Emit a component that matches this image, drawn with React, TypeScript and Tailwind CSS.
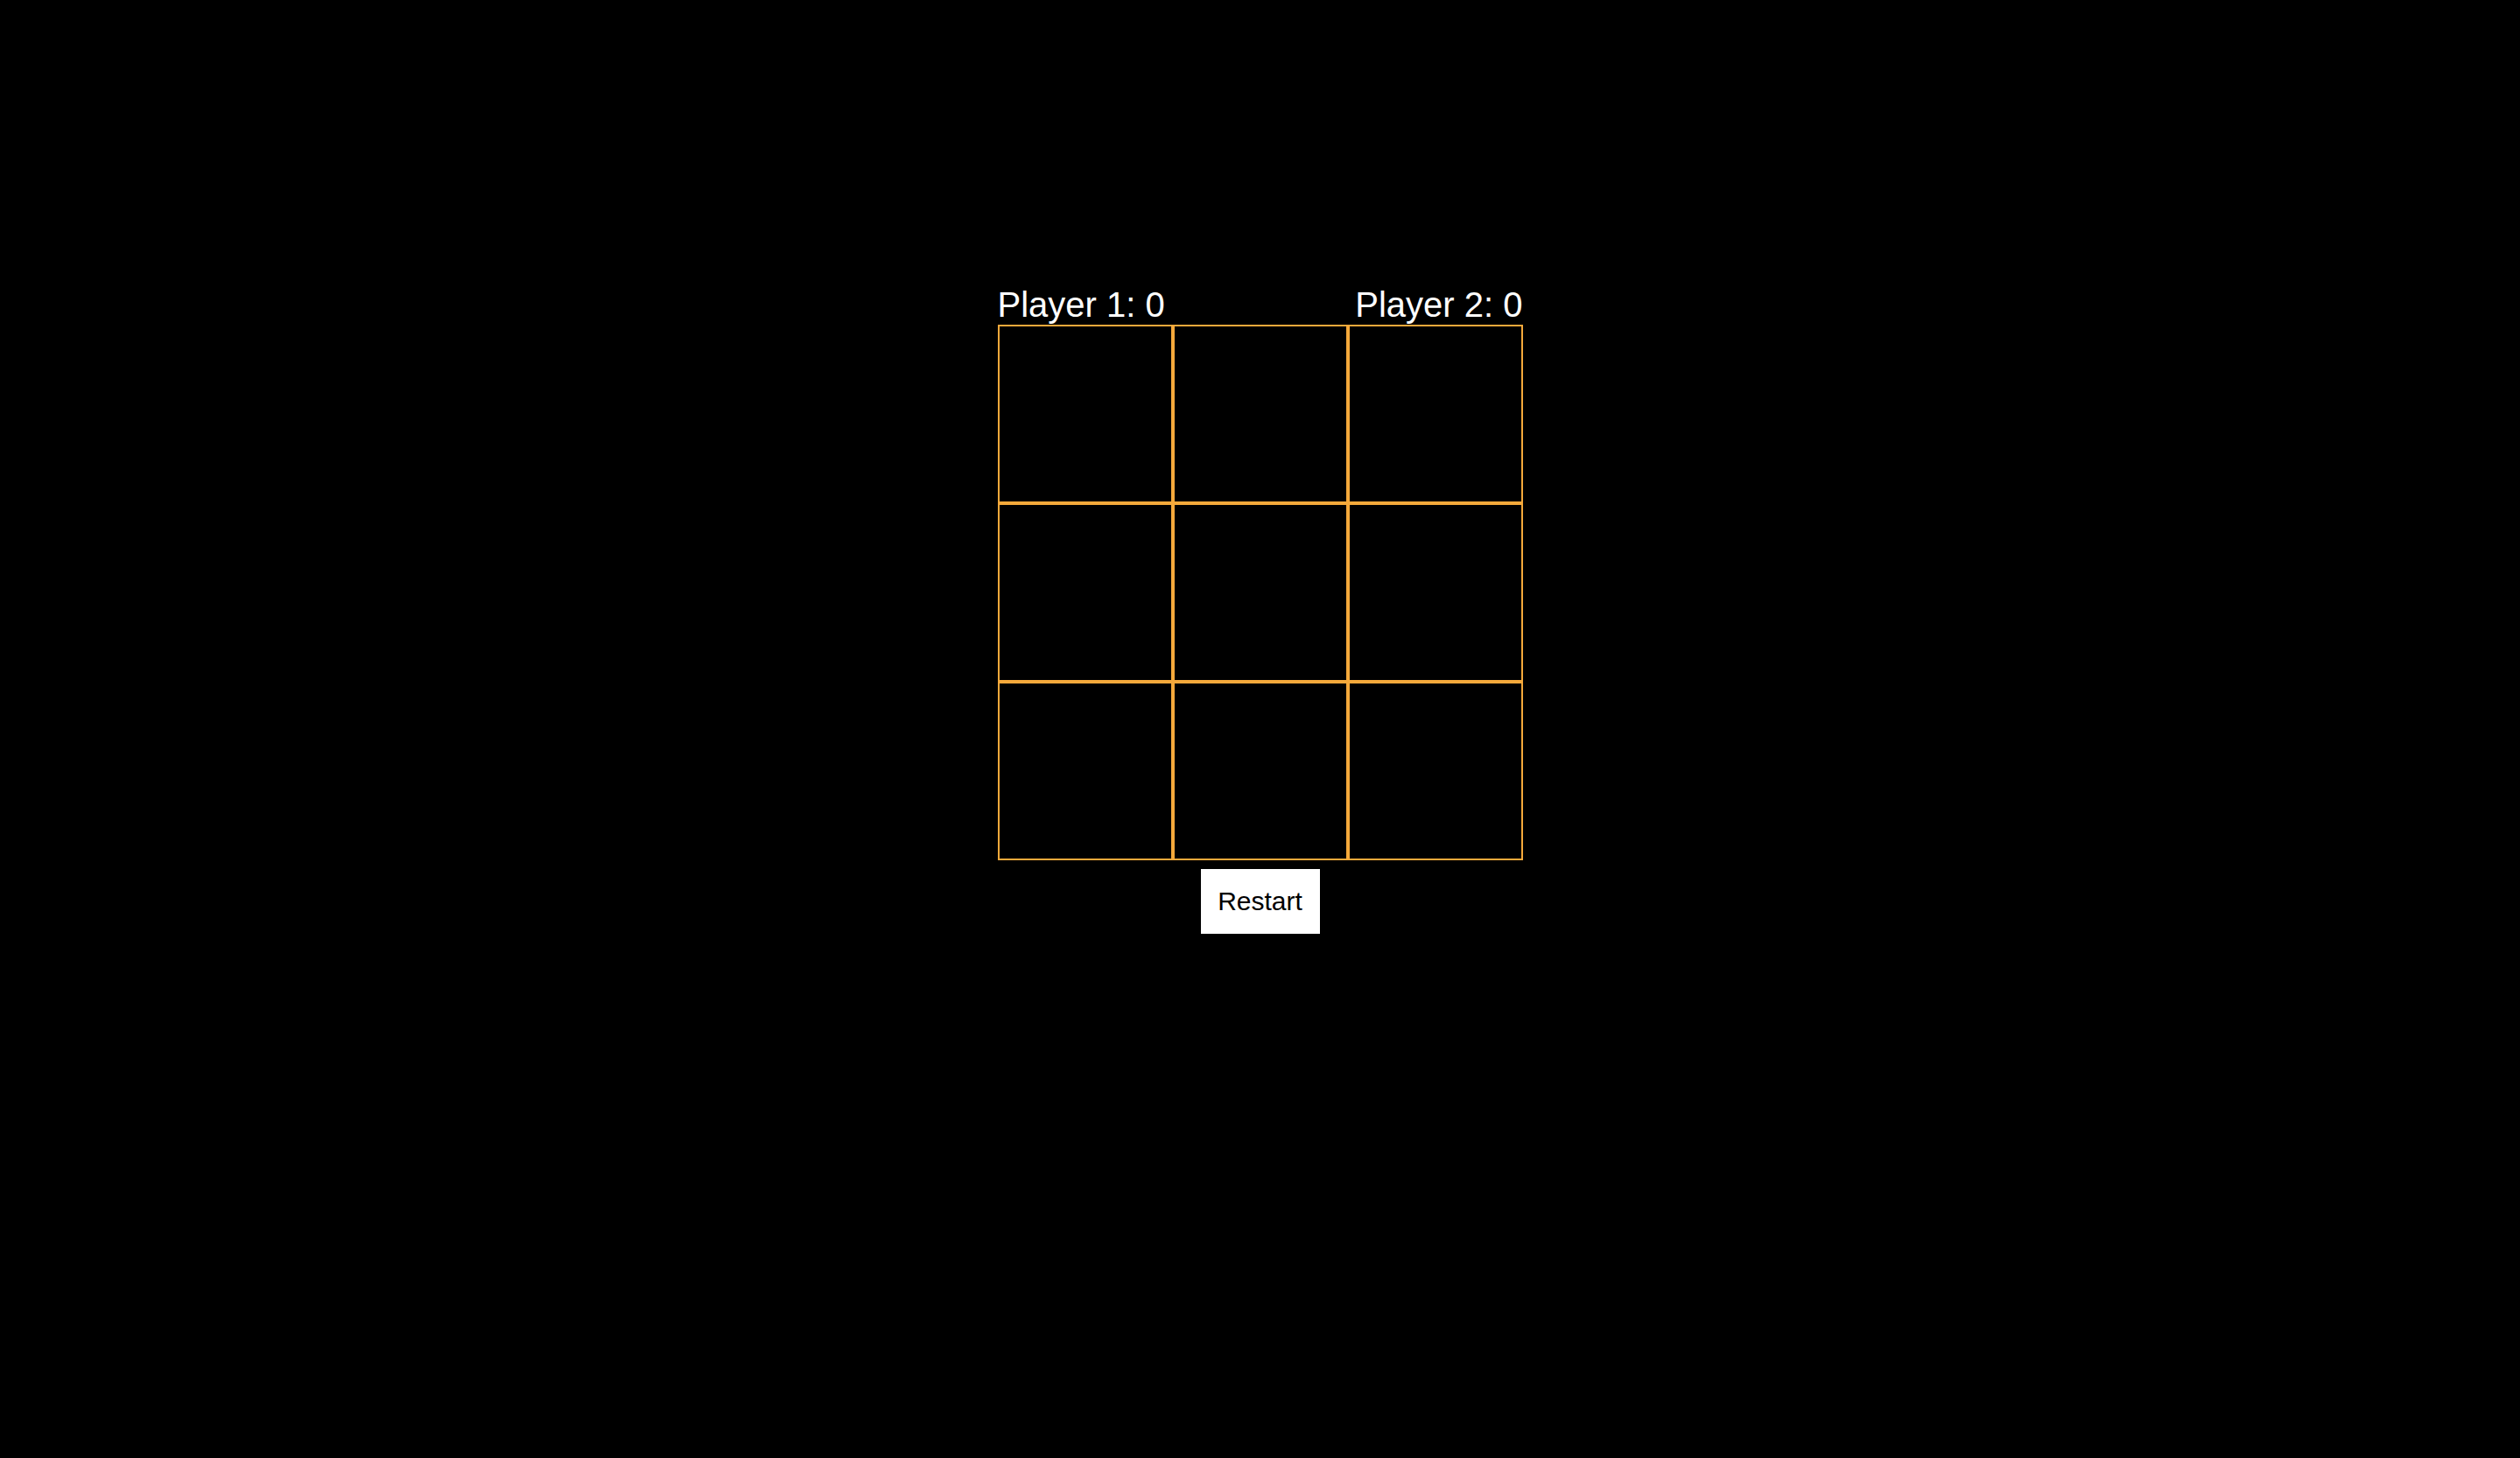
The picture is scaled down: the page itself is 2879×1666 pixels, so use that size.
const cells = Array.from({ length: 9 }, (_, i) => i)

export default function App() {
  return (
    <div className="min-h-screen w-full bg-black flex flex-col items-center pt-[326px] font-['Liberation_Sans',Arial,sans-serif]">
      <div className="w-[600px] flex justify-between text-white text-[40px] leading-[45px]">
        <span>Player 1: 0</span>
        <span>Player 2: 0</span>
      </div>
      <div className="grid grid-cols-3 w-[600px]">
        {cells.map(i => (
          <div key={i} className="w-[200px] h-[204px] border-2 border-[#f5a93b] bg-black"></div>
        ))}
      </div>
      <button className="mt-[10px] bg-white text-black text-[30px] leading-[34px] px-5 py-5 w-[136px] h-[74px] flex items-center justify-center">
        Restart
      </button>
    </div>
  )
}
